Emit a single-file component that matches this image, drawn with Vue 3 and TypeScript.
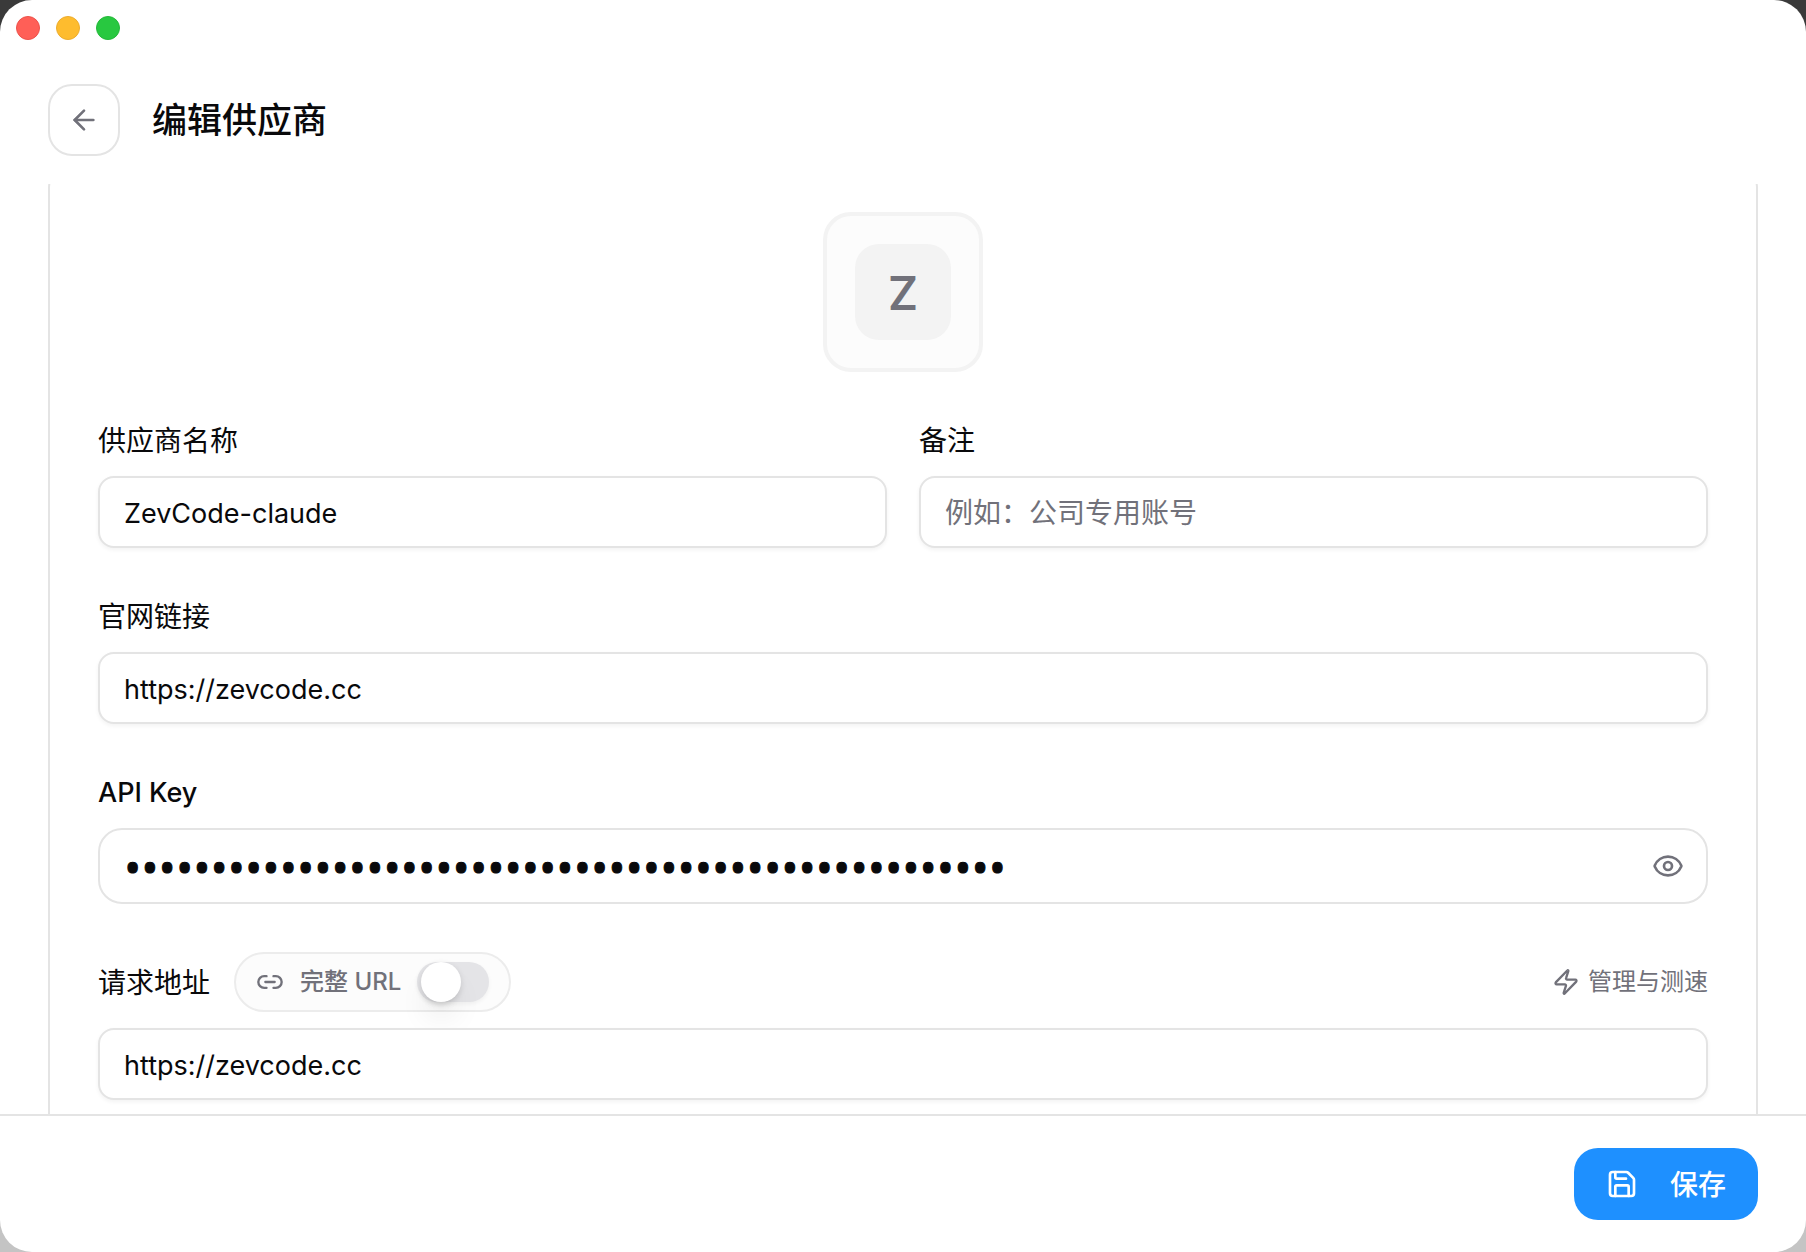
<script setup lang="ts">
import { ref } from 'vue'

const name = ref('ZevCode-claude')
const note = ref('')
const website = ref('https://zevcode.cc')
const apiKey = ref('k'.repeat(51))
const endpoint = ref('https://zevcode.cc')
const fullUrl = ref(false)
const keyVisible = ref(false)
</script>

<template>
  <div class="window">
    <div class="titlebar">
      <button class="light close" type="button" aria-label="关闭"></button>
      <button class="light minimize" type="button" aria-label="最小化"></button>
      <button class="light maximize" type="button" aria-label="缩放"></button>
    </div>

    <header class="header">
      <button class="back" type="button" aria-label="返回">
        <svg class="icon icon-lg" viewBox="0 0 24 24">
          <path d="m12 19-7-7 7-7" />
          <path d="M19 12H5" />
        </svg>
      </button>
      <h1 class="title">编辑供应商</h1>
    </header>

    <main class="content">
      <form id="provider-form" class="panel" @submit.prevent>
        <button class="avatar" type="button" aria-label="选择图标">
          <span class="avatar-letter">Z</span>
        </button>

        <div class="columns">
          <div class="field">
            <label class="label" for="name">供应商名称</label>
            <input id="name" v-model="name" class="input" type="text" />
          </div>
          <div class="field">
            <label class="label" for="note">备注</label>
            <input id="note" v-model="note" class="input" type="text" placeholder="例如：公司专用账号" />
          </div>
        </div>

        <div class="field">
          <label class="label" for="website">官网链接</label>
          <input id="website" v-model="website" class="input" type="text" />
        </div>

        <div class="field">
          <label class="label latin" for="api-key">API Key</label>
          <div class="secret">
            <input
              id="api-key"
              v-model="apiKey"
              class="secret-input"
              :class="{ masked: !keyVisible }"
              :type="keyVisible ? 'text' : 'password'"
              autocomplete="off"
            />
            <button class="plain" type="button" aria-label="显示 API Key" @click="keyVisible = !keyVisible">
              <svg class="icon icon-lg" viewBox="0 0 24 24">
                <path d="M2.062 12.348a1 1 0 0 1 0-.696 10.75 10.75 0 0 1 19.876 0 1 1 0 0 1 0 .696 10.75 10.75 0 0 1-19.876 0" />
                <circle cx="12" cy="12" r="3" />
              </svg>
            </button>
          </div>
        </div>

        <div class="field">
          <div class="endpoint-row">
            <label class="label" for="endpoint">请求地址</label>
            <label class="pill" for="full-url">
              <svg class="icon" viewBox="0 0 24 24">
                <path d="M9 17H7A5 5 0 0 1 7 7h2" />
                <path d="M15 7h2a5 5 0 1 1 0 10h-2" />
                <path d="M8 12h8" />
              </svg>
              <span>完整 URL</span>
              <input id="full-url" v-model="fullUrl" class="switch" type="checkbox" role="switch" />
            </label>
            <button class="plain manage" type="button">
              <svg class="icon" viewBox="0 0 24 24">
                <path d="M4 14a1 1 0 0 1-.78-1.63l9.9-10.2a.5.5 0 0 1 .86.46l-1.92 6.02A1 1 0 0 0 13 10h7a1 1 0 0 1 .78 1.63l-9.9 10.2a.5.5 0 0 1-.86-.46l1.92-6.02A1 1 0 0 0 11 14z" />
              </svg>
              <span>管理与测速</span>
            </button>
          </div>
          <input id="endpoint" v-model="endpoint" class="input" type="text" />
        </div>
      </form>
    </main>

    <footer class="footer">
      <button class="save" type="submit" form="provider-form">
        <svg class="icon icon-lg" viewBox="0 0 24 24">
          <path d="M15.2 3a2 2 0 0 1 1.4.6l3.8 3.8a2 2 0 0 1 .6 1.4V19a2 2 0 0 1-2 2H5a2 2 0 0 1-2-2V5a2 2 0 0 1 2-2z" />
          <path d="M17 21v-7a1 1 0 0 0-1-1H8a1 1 0 0 0-1 1v7" />
          <path d="M7 3v4a1 1 0 0 0 1 1h7" />
        </svg>
        <span class="save-text">保存</span>
      </button>
    </footer>
  </div>
</template>

<style>
html {
  background: linear-gradient(#3a3a3a 50%, #c4c4c4 50%);
}

body {
  margin: 0;
}
</style>

<style scoped>
.window,
.window * {
  box-sizing: border-box;
}

.window {
  display: flex;
  flex-direction: column;
  height: 100vh;
  overflow: hidden;
  border-radius: 32px;
  background: #fff;
  color: #09090b;
  font-family: Inter, "Noto Sans CJK SC", sans-serif;
  font-size: 28px;
  line-height: 40px;
}

button,
input {
  margin: 0;
  font: inherit;
  color: inherit;
}

button {
  padding: 0;
  border: 0;
  background: none;
  cursor: pointer;
}

.icon {
  display: block;
  flex: none;
  width: 28px;
  height: 28px;
  fill: none;
  stroke: currentColor;
  stroke-width: 2;
  stroke-linecap: round;
  stroke-linejoin: round;
}

.icon-lg {
  width: 32px;
  height: 32px;
}

.titlebar {
  display: flex;
  flex: none;
  gap: 16px;
  padding: 16px;
}

.light {
  width: 24px;
  height: 24px;
  border: 1px solid;
  border-radius: 50%;
}

.close {
  border-color: #ec524b;
  background: #ff5f57;
}

.minimize {
  border-color: #ecac2e;
  background: #febc2e;
}

.maximize {
  border-color: #24b83a;
  background: #28c840;
}

.header {
  display: flex;
  flex: none;
  align-items: center;
  gap: 32px;
  padding: 28px 48px;
}

.back {
  display: flex;
  align-items: center;
  justify-content: center;
  width: 72px;
  height: 72px;
  border: 2px solid #e4e4e4;
  border-radius: 24px;
  color: #71717a;
}

.title {
  margin: 0;
  font-size: 35px;
  font-weight: 500;
  line-height: 56px;
}

.content {
  flex: 1;
  min-height: 0;
  overflow: hidden;
  padding: 0 48px;
}

.panel {
  display: flex;
  flex-direction: column;
  gap: 48px;
  margin-top: -20px;
  padding: 46px 48px;
  border: 2px solid #e4e4e4;
  border-radius: 24px;
}

.avatar {
  display: flex;
  align-items: center;
  justify-content: center;
  align-self: center;
  width: 160px;
  height: 160px;
  border: 4px solid #f3f3f3;
  border-radius: 28px;
  background: #fcfcfc;
}

.avatar-letter {
  width: 96px;
  padding-top: 2px;
  border-radius: 24px;
  background: #f3f3f3;
  color: #71717a;
  font-size: 46px;
  font-weight: 600;
  line-height: 94px;
}

.columns {
  display: grid;
  grid-template-columns: 1fr 1fr;
  gap: 32px;
}

.field {
  display: flex;
  flex-direction: column;
  gap: 16px;
  min-width: 0;
}

.label {
  padding-top: 2px;
  line-height: 38px;
}

.latin {
  font-size: 27px;
  font-weight: 500;
}

.input,
.secret {
  width: 100%;
  height: 72px;
  padding: 2px 24px 0;
  border: 2px solid #e4e4e4;
  border-radius: 16px;
  background: #fff;
}

.input {
  font-size: 27px;
  box-shadow: 0 2px 4px rgb(0 0 0 / 5%);
}

.input::placeholder {
  color: #71717a;
  font-size: 28px;
  opacity: 1;
}

.secret {
  display: flex;
  align-items: center;
  height: 76px;
  padding: 0 22px 0 24px;
  border-radius: 24px;
}

.secret-input {
  flex: 1;
  min-width: 0;
  height: 72px;
  padding: 0;
  border: 0;
  outline: 0;
  background: none;
  font-size: 27px;
}

/* Large, heavy dots while the key is hidden */
.masked {
  font-family: "Open Sans", sans-serif;
  font-size: 46px;
  -webkit-text-stroke: 1px currentColor;
}

.plain {
  color: #71717a;
}

.endpoint-row {
  display: flex;
  align-items: center;
  gap: 24px;
}

.pill {
  display: flex;
  align-items: center;
  gap: 16px;
  height: 60px;
  padding: 0 20px;
  border: 2px solid #ececec;
  border-radius: 30px;
  background: #fcfcfc;
  color: #71717a;
  font-size: 24px;
  font-weight: 500;
  line-height: 32px;
}

.switch {
  appearance: none;
  display: flex;
  align-items: center;
  width: 72px;
  height: 40px;
  padding: 0 4px;
  border-radius: 20px;
  background: #e4e4e7;
  box-shadow: 0 2px 4px rgb(0 0 0 / 5%);
}

.switch::before {
  content: "";
  width: 40px;
  height: 40px;
  border-radius: 50%;
  background: #fff;
  box-shadow: 0 20px 30px -6px rgb(0 0 0 / 10%), 0 8px 12px -8px rgb(0 0 0 / 10%), 0 2px 6px rgb(0 0 0 / 12%);
}

.switch:checked {
  justify-content: flex-end;
  background: #1e90ff;
}

.manage {
  display: flex;
  align-items: center;
  gap: 8px;
  margin-left: auto;
  font-size: 24px;
  line-height: 32px;
}

.footer {
  display: flex;
  flex: none;
  justify-content: flex-end;
  padding: 32px 48px;
  border-top: 2px solid #e4e4e4;
}

.save {
  display: flex;
  align-items: center;
  gap: 32px;
  height: 72px;
  padding: 0 32px;
  border-radius: 24px;
  background: #1e90ff;
  color: #fff;
  font-weight: 500;
}

.save-text {
  padding-top: 2px;
}
</style>
